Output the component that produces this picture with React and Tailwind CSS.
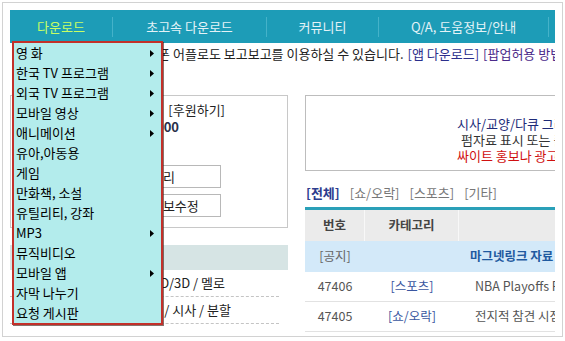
import React from "react";

const navItems = [
  { label: "다운로드", w: "w-[103px]", active: true },
  { label: "초고속 다운로드", w: "w-[154px]" },
  { label: "커뮤니티", w: "w-[112px]" },
  { label: "Q/A, 도움정보/안내", w: "w-[170px]" },
];

const menuItems = [
  { label: "영 화", sub: true },
  { label: "한국 TV 프로그램", sub: true },
  { label: "외국 TV 프로그램", sub: true },
  { label: "모바일 영상", sub: true },
  { label: "애니메이션", sub: true },
  { label: "유아,아동용" },
  { label: "게임" },
  { label: "만화책, 소설" },
  { label: "유틸리티, 강좌" },
  { label: "MP3", sub: true },
  { label: "뮤직비디오" },
  { label: "모바일 앱", sub: true },
  { label: "자막 나누기" },
  { label: "요청 게시판" },
];

const rows = [
  { no: "47406", cat: "[스포츠]", title: "NBA Playoffs R2 Game 4 Celtics vs 76ers" },
  { no: "47405", cat: "[쇼/오락]", title: "전지적 참견 시점 E101 180512" },
];

const Arrow = () => (
  <svg width="4" height="7" viewBox="0 0 4 7" className="shrink-0">
    <path d="M0 0 L4 3.5 L0 7 Z" fill="#000" />
  </svg>
);

const App = () => {
  return (
    <div className="w-[565px] h-[341px] bg-white p-[2px] font-['Noto_Sans_CJK_KR',sans-serif] text-[13px] text-[#222]">
      <div className="h-[335px] border border-[#d2d2d2] px-[7px] pt-[7px] overflow-hidden">
        <div className="relative w-[545px] h-full overflow-hidden">
          {/* top nav */}
          <div className="flex h-[33px] bg-[#1d9cb7]">
            {navItems.map((item, i) => (
              <div key={i} className={`${item.w} shrink-0 flex items-center`}>
                <div className={`flex-1 text-center ${item.active ? "text-[#c8ff64]" : "text-[#e4f3f7]"}`}>
                  {item.label}
                </div>
                <div className="w-px h-[20px] bg-[#45b2c9]"></div>
              </div>
            ))}
          </div>

          {/* notice line */}
          <div className="flex h-[21px] items-center whitespace-nowrap">
            <div className="w-[163px] shrink-0 flex justify-end pr-[3px]">
              <span>모바일 웹과 스마트폰</span>
            </div>
            <span>어플로도 보고보고를 이용하실 수 있습니다.</span>
            <span className="ml-[4px] text-[#2b2f8c]">[앱 다운로드]</span>
            <span className="ml-[4px] text-[#4b2a8a]">[팝업허용 방법 안내]</span>
          </div>

          {/* main */}
          <div className="flex mt-[31px]">
            {/* left column */}
            <div className="w-[278px] shrink-0">
              <div className="h-[133px] border border-[#c8c8c8] pt-[6px] whitespace-nowrap">
                <div className="w-[214px] flex justify-end gap-[14px] h-[16px] items-center">
                  <span>보고보고님</span>
                  <span>[후원하기]</span>
                </div>
                <div className="w-[168px] flex justify-end h-[17px] items-center font-bold text-[#2a2f4a]">
                  <span>포인트 : 23,000</span>
                </div>
                <div className="ml-[108px] mt-[30px] w-[102px] h-[23px] border border-[#b8b8b8] pl-[7px] flex items-center">
                  쪽지관리
                </div>
                <div className="ml-[108px] mt-[6px] w-[102px] h-[23px] border border-[#b8b8b8] pl-[7px] flex items-center">
                  회원정보수정
                </div>
              </div>

              <div className="mt-[17px]">
                <div className="h-[25px] bg-[#d6e4e4]"></div>
                <div className="h-[27px] mr-[9px] border-b border-dashed border-[#c4c4c4] flex items-center whitespace-nowrap">
                  <div className="w-[215px] flex justify-end">
                    <span>액션 / 2D/3D / 멜로</span>
                  </div>
                </div>
                <div className="h-[27px] mr-[9px] border-b border-dashed border-[#c4c4c4] flex items-center whitespace-nowrap">
                  <div className="w-[221px] flex justify-end">
                    <span>다큐 / 시사 / 분할</span>
                  </div>
                </div>
              </div>
            </div>

            {/* right column */}
            <div className="ml-[17px] w-[500px] shrink-0 whitespace-nowrap">
              <div className="h-[76px] border border-[#bdbdbd] pt-[20px] leading-[16px]">
                <div className="pl-[151px] text-[#1d2a78]">시사/교양/다큐 그리고 영화 자료는</div>
                <div className="pl-[155px] text-[#333]">펌자료 표시 또는 출처를 꼭 남겨주세요</div>
                <div className="pl-[151px] text-[#d01010]">싸이트 홍보나 광고성 글은 삭제됩니다</div>
              </div>

              <div className="mt-[12px] h-[20px] flex items-center gap-[10px] pl-[1px]">
                <span className="font-bold text-[#2d3c8e]">[전체]</span>
                <span className="text-[#777]">[쇼/오락]</span>
                <span className="text-[#777]">[스포츠]</span>
                <span className="text-[#777]">[기타]</span>
              </div>

              <div className="mt-[4px] border-t-[3px] border-[#2aa0b8] text-[12.5px]">
                <div className="flex h-[31px] bg-[#ebebeb] font-bold text-[#444]">
                  <div className="w-[60px] shrink-0 flex items-center justify-center border-r border-[#f8f8f8]">번호</div>
                  <div className="w-[94px] shrink-0 flex items-center justify-center border-r border-[#f8f8f8]">카테고리</div>
                  <div className="flex-1 flex items-center justify-center">제목</div>
                </div>
                <div className="flex h-[31px] bg-[#d3e9f9]">
                  <div className="w-[60px] shrink-0 flex items-center justify-center text-[#666]">[공지]</div>
                  <div className="w-[94px] shrink-0"></div>
                  <div className="flex-1 flex items-center pl-[11px] font-bold text-[#1f5aa0]">마그넷링크 자료 받는 방법</div>
                </div>
                {rows.map((r, i) => (
                  <div key={i} className="flex h-[30px] border-b border-[#e2e2e2] text-[#555]">
                    <div className="w-[60px] shrink-0 flex items-center justify-center">{r.no}</div>
                    <div className="w-[94px] shrink-0 flex items-center justify-center text-[#3a56a0]">{r.cat}</div>
                    <div className="flex-1 flex items-center pl-[16px]">{r.title}</div>
                  </div>
                ))}
              </div>
            </div>
          </div>

          {/* dropdown menu */}
          <div className="absolute left-[2px] top-[31px] w-[151px] border-2 border-[#c3302a] bg-[#b3ecec] shadow-[1px_1px_0_rgba(60,20,10,0.6)]">
            {menuItems.map((m, i) => (
              <div key={i} className="h-[20px] flex items-center justify-between pl-[2px] pr-[7px] text-black whitespace-nowrap">
                <span>{m.label}</span>
                {m.sub && <Arrow />}
              </div>
            ))}
          </div>
        </div>
      </div>
    </div>
  );
};

export default App;
